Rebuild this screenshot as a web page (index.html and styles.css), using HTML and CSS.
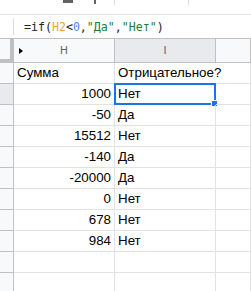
FILE: index.html
```html
<!DOCTYPE html>
<html lang="ru">
<head>
    <meta charset="UTF-8">
    <title>Sheet</title>
    <link rel="stylesheet" href="styles.css">
</head>
<body>

    <div class="toolbar-edge">
        <span class="tb-block"></span>
        <span class="tb-tick"></span>
        <span class="tb-sep first"></span>
        <span class="tb-sep second"></span>
    </div>

    <div class="formula-bar">
        <div class="fx-slot"></div>
        <div class="formula">=if(<span class="ref">H2</span>&lt;<span class="num">0</span>,<span class="str">"Да"</span>,<span class="str">"Нет"</span>)</div>
    </div>

    <div class="sheet">
        <div class="corner"></div>
        <div class="col-head"><span class="freeze-arrow"></span>H</div>
        <div class="col-head active">I</div>
        <div class="col-head"></div>

        <div class="row-head"></div>
        <div class="cell">Сумма</div>
        <div class="cell overflow">Отрицательное?</div>
        <div class="cell"></div>

        <div class="row-head active"></div>
        <div class="cell num-cell">1000</div>
        <div class="cell selected">Нет<span class="sel-box"></span><span class="sel-handle"></span></div>
        <div class="cell"></div>

        <div class="row-head"></div>
        <div class="cell num-cell">-50</div>
        <div class="cell">Да</div>
        <div class="cell"></div>

        <div class="row-head"></div>
        <div class="cell num-cell">15512</div>
        <div class="cell">Нет</div>
        <div class="cell"></div>

        <div class="row-head"></div>
        <div class="cell num-cell">-140</div>
        <div class="cell">Да</div>
        <div class="cell"></div>

        <div class="row-head"></div>
        <div class="cell num-cell">-20000</div>
        <div class="cell">Да</div>
        <div class="cell"></div>

        <div class="row-head"></div>
        <div class="cell num-cell">0</div>
        <div class="cell">Нет</div>
        <div class="cell"></div>

        <div class="row-head"></div>
        <div class="cell num-cell">678</div>
        <div class="cell">Нет</div>
        <div class="cell"></div>

        <div class="row-head"></div>
        <div class="cell num-cell">984</div>
        <div class="cell">Нет</div>
        <div class="cell"></div>

        <div class="row-head"></div>
        <div class="cell"></div>
        <div class="cell"></div>
        <div class="cell"></div>

        <div class="row-head"></div>
        <div class="cell"></div>
        <div class="cell"></div>
        <div class="cell"></div>
    </div>

</body>
</html>
```

FILE: styles.css
```css
body {
    margin: 0;
    background-color: #fff;
    font-family: "Liberation Sans", Arial, sans-serif;
    overflow: hidden;
}

.toolbar-edge {
    display: flex;
    align-items: flex-start;
    height: 14px;
    border-bottom: 1px solid #e0e0e0;
}

.tb-block {
    width: 10px;
    height: 3px;
    margin-left: 63px;
    background-color: #5f6368;
}

.tb-tick {
    width: 2px;
    height: 4px;
    margin-left: 21px;
    background-color: #5f6368;
}

.tb-sep {
    width: 1px;
    height: 5px;
    background-color: #dadce0;
}

.tb-sep.first {
    margin-left: 18px;
}

.tb-sep.second {
    margin-left: 73px;
}

.formula-bar {
    display: flex;
    align-items: center;
    height: 23px;
}

.fx-slot {
    width: 13px;
    height: 17px;
    border-right: 1px solid #dadce0;
}

.formula {
    margin-left: 10px;
    font-family: "DejaVu Sans Mono", monospace;
    font-size: 11.6px;
    line-height: 22px;
    color: #202124;
    white-space: nowrap;
}

.formula .ref {
    color: #f0a43c;
}

.formula .num {
    color: #4a86f0;
}

.formula .str {
    color: #188038;
}

.sheet {
    display: grid;
    grid-template-columns: 14px 101px 101px 1fr;
    grid-template-rows: 24px repeat(11, 21px);
    border-top: 1px solid #c0c0c0;
}

.corner {
    box-sizing: border-box;
    background-color: #f8f9fa;
    border-right: 4px solid #c0c0c0;
    border-bottom: 4px solid #c0c0c0;
}

.col-head {
    position: relative;
    box-sizing: border-box;
    background-color: #f8f9fa;
    border-right: 1px solid #c0c0c0;
    border-bottom: 1px solid #c0c0c0;
    color: #5f6368;
    font-family: Roboto, sans-serif;
    font-size: 11px;
    line-height: 23px;
    text-align: center;
}

.col-head.active {
    background-color: #e8eaed;
}

.freeze-arrow {
    position: absolute;
    left: 5px;
    top: 9px;
    width: 0;
    height: 0;
    border-top: 3px solid transparent;
    border-bottom: 3px solid transparent;
    border-left: 4px solid #000;
}

.row-head {
    box-sizing: border-box;
    background-color: #f8f9fa;
    border-right: 1px solid #c0c0c0;
    border-bottom: 1px solid #c0c0c0;
}

.row-head.active {
    background-color: #e8eaed;
}

.cell {
    position: relative;
    box-sizing: border-box;
    padding: 0 3px;
    border-right: 1px solid #e2e2e2;
    border-bottom: 1px solid #e2e2e2;
    font-size: 13.33px;
    line-height: 20px;
    color: #000;
    white-space: nowrap;
}

.cell.num-cell {
    text-align: right;
}

.cell.overflow {
    border-right-color: transparent;
    overflow: visible;
}

.sel-box {
    position: absolute;
    top: -1px;
    left: -1px;
    right: -1px;
    bottom: -1px;
    border: 2px solid #1a73e8;
}

.sel-handle {
    position: absolute;
    right: -3px;
    bottom: -3px;
    width: 5px;
    height: 5px;
    background-color: #1a73e8;
    border: 1px solid #fff;
}
```
